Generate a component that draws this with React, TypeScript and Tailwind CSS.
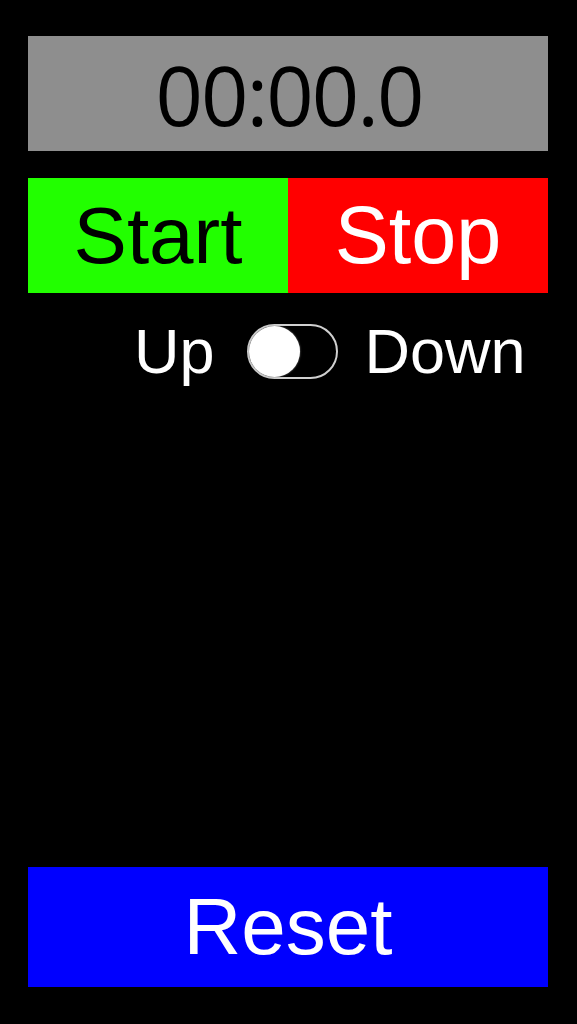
import React, { useState } from 'react';

export default function App() {
  const [down, setDown] = useState(false);

  return (
    <div className="flex min-h-screen w-full flex-col bg-black pb-[37px] pl-[28px] pr-[29px] pt-[36px]" style={{ fontFamily: '"Liberation Sans", Arial, sans-serif' }}>
      {/* Display */}
      <div className="flex h-[115px] items-center justify-center bg-[#8e8e8e]">
        <span className="pl-[2px] text-[83px] leading-none tracking-[-2px] text-black" style={{ fontFamily: '"Open Sans", sans-serif' }}>
          00:00.0
        </span>
      </div>

      {/* Start / Stop */}
      <div className="mt-[27px] flex h-[115px]">
        <button className="flex flex-1 items-center justify-center bg-[#22ff00] text-[80px] leading-none text-black">
          Start
        </button>
        <button className="flex flex-1 items-center justify-center bg-[#ff0000] text-[81px] leading-none text-white">
          Stop
        </button>
      </div>

      {/* Up / Down toggle */}
      <div className="mt-[27px] flex items-center pl-[106px] text-[63px] leading-none text-white">
        <span>Up</span>
        <button
          onClick={() => setDown(!down)}
          className="ml-[32px] mr-[27px] flex h-[55px] w-[91px] items-center rounded-full border-2 border-[#d0d0d0] bg-black p-0"
        >
          <span className={`h-[51px] w-[51px] rounded-full bg-white shadow-[0_0_2px_#888] ${down ? 'ml-auto' : ''}`} />
        </button>
        <span>Down</span>
      </div>

      {/* Reset */}
      <button className="mt-auto flex h-[120px] items-center justify-center bg-[#0000ff] text-[80px] leading-none text-white">
        Reset
      </button>
    </div>
  );
}
